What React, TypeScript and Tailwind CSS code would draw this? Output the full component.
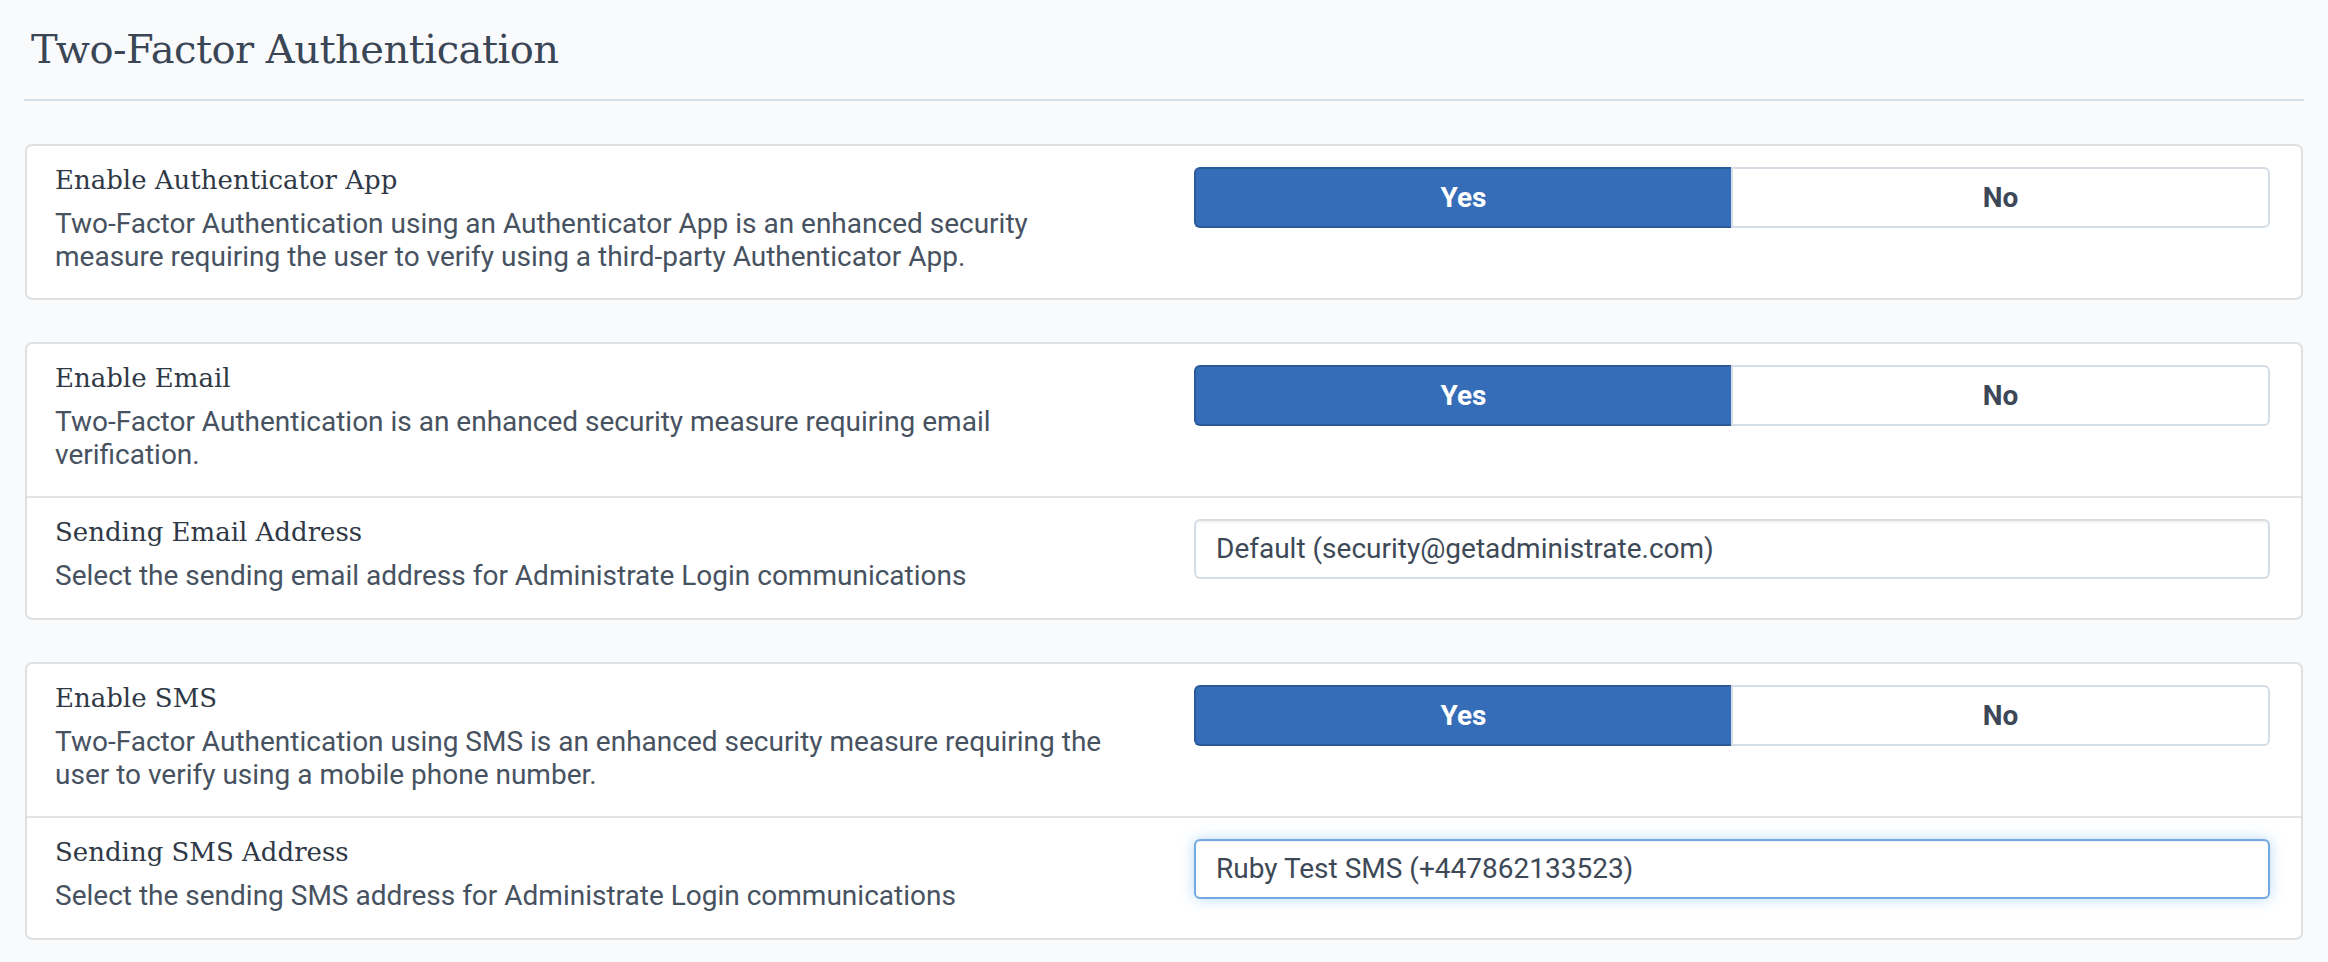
import React from "react";

const serif = "font-['DejaVu_Serif',serif]";
const sans = "font-['Roboto','Liberation_Sans',sans-serif]";

function Toggle() {
  return (
    <div className={`flex h-[61px] w-full ${sans} text-[28px] font-bold`}>
      <div className="flex flex-1 items-center justify-center rounded-l-[6px] border-2 border-r-0 border-[#2b5a9a] bg-[#356db8] text-white">
        Yes
      </div>
      <div className="flex flex-1 items-center justify-center rounded-r-[6px] border-2 border-[#d5dee6] bg-white text-[#3c4858]">
        No
      </div>
    </div>
  );
}

function Field({ value, focused }: { value: string; focused?: boolean }) {
  return (
    <div
      className={
        focused
          ? `flex h-[60px] w-full items-center rounded-[6px] border-2 border-[#72a9e2] bg-white px-[20px] ${sans} text-[28px] text-[#3e4957] shadow-[inset_0_1px_1px_rgba(0,0,0,0.075),0_0_14px_rgba(102,175,233,0.45)]`
          : `flex h-[60px] w-full items-center rounded-[6px] border-2 border-[#d5dde5] bg-white px-[20px] ${sans} text-[28px] text-[#3e4957] shadow-[inset_0_2px_2px_rgba(0,0,0,0.05)]`
      }
    >
      {value}
    </div>
  );
}

function Row({
  label,
  desc,
  right,
  divider,
}: {
  label: string;
  desc: string;
  right: React.ReactNode;
  divider?: boolean;
}) {
  return (
    <div
      className={`flex items-start pt-[21px] pl-[28px] pr-[31px] ${
        divider ? "border-t-2 border-[#e2e3e5] pb-[26px]" : "pb-[25px]"
      }`}
    >
      <div className="flex-1 pr-[69px]">
        <div
          className={`-mt-[3px] ${serif} text-[26px] leading-[32px] tracking-[0px] text-[#2f3946]`}
        >
          {label}
        </div>
        <div
          className={`mt-[11px] ${sans} text-[28px] leading-[33px] text-[#475261]`}
        >
          {desc}
        </div>
      </div>
      <div className="w-[1076px] shrink-0">{right}</div>
    </div>
  );
}

function Panel({ children }: { children: React.ReactNode }) {
  return (
    <div className="rounded-[7px] border-2 border-[#dfe0e2] bg-white">
      {children}
    </div>
  );
}

export default function App() {
  return (
    <div className="min-h-screen w-full bg-[#f9fafc] px-[24px] pt-[25px] pb-[24px]">
      <h1
        className={`pl-[7px] ${serif} text-[40px] font-light leading-[48px] tracking-[-0.5px] text-[#3a4656]`}
      >
        Two-Factor Authentication
      </h1>
      <div className="mt-[26px] h-[2px] bg-[#d8e0e7]" />
      <div className="mt-[43px] flex flex-col gap-[42px] px-[1px]">
        <Panel>
          <Row
            label="Enable Authenticator App"
            desc="Two-Factor Authentication using an Authenticator App is an enhanced security measure requiring the user to verify using a third-party Authenticator App."
            right={<Toggle />}
          />
        </Panel>
        <Panel>
          <Row
            label="Enable Email"
            desc="Two-Factor Authentication is an enhanced security measure requiring email verification."
            right={<Toggle />}
          />
          <Row
            divider
            label="Sending Email Address"
            desc="Select the sending email address for Administrate Login communications"
            right={<Field value="Default (security@getadministrate.com)" />}
          />
        </Panel>
        <Panel>
          <Row
            label="Enable SMS"
            desc="Two-Factor Authentication using SMS is an enhanced security measure requiring the user to verify using a mobile phone number."
            right={<Toggle />}
          />
          <Row
            divider
            label="Sending SMS Address"
            desc="Select the sending SMS address for Administrate Login communications"
            right={<Field value="Ruby Test SMS (+447862133523)" focused />}
          />
        </Panel>
      </div>
    </div>
  );
}
